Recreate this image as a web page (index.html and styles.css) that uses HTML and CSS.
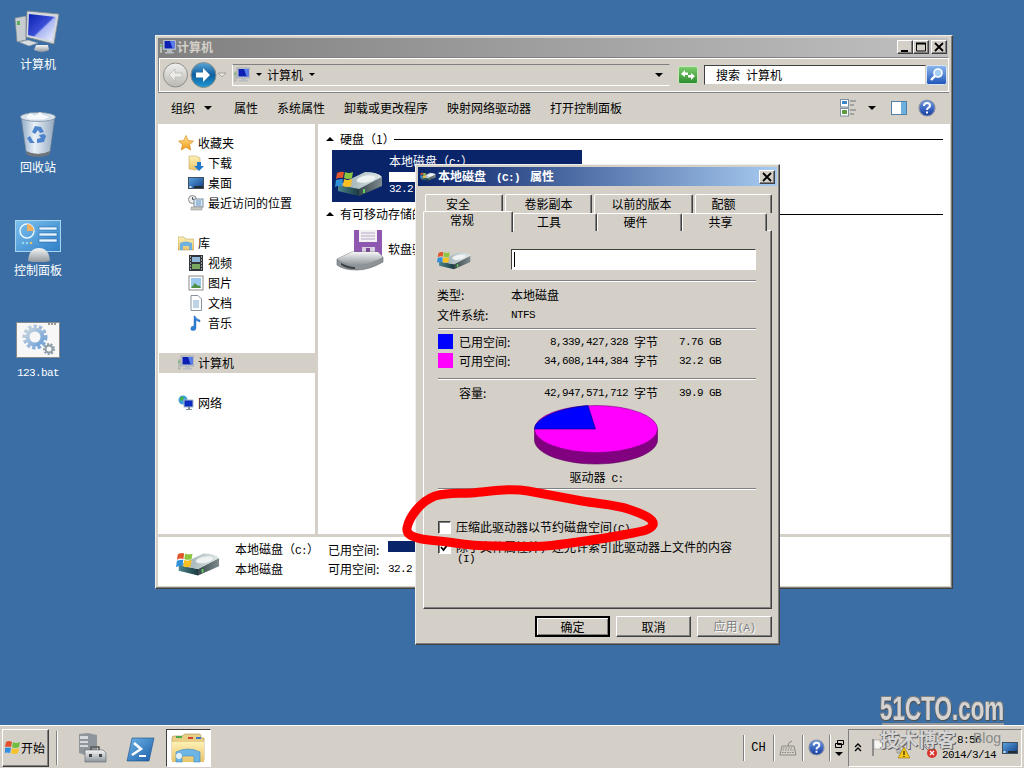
FILE: index.html
```html
<!DOCTYPE html>
<html lang="zh-CN">
<head>
    <meta charset="UTF-8">
    <meta name="viewport" content="width=device-width, initial-scale=1.0">
    <title>本地磁盘 (C:) 属性</title>
    <link rel="stylesheet" href="styles.css">
</head>
<body>
    <svg class="defs" width="0" height="0" aria-hidden="true">
        <defs>
            <linearGradient id="g-screen" x1="0" y1="0" x2="1" y2="1"><stop offset="0" stop-color="#0a1fb0"/><stop offset=".5" stop-color="#3a50d8"/><stop offset=".55" stop-color="#a9b6f2"/><stop offset="1" stop-color="#f2f4ff"/></linearGradient>
            <linearGradient id="g-metal" x1="0" y1="0" x2="0" y2="1"><stop offset="0" stop-color="#f4f5f6"/><stop offset="1" stop-color="#8f959b"/></linearGradient>
            <linearGradient id="g-bin" x1="0" y1="0" x2="1" y2="0"><stop offset="0" stop-color="#8ea9c4"/><stop offset=".4" stop-color="#eaf1f8"/><stop offset="1" stop-color="#90a6bd"/></linearGradient>
            <linearGradient id="g-panel" x1="0" y1="0" x2="1" y2="1"><stop offset="0" stop-color="#7cc0ee"/><stop offset="1" stop-color="#2f80c8"/></linearGradient>
            <linearGradient id="g-side" x1="0" y1="0" x2="1" y2="0"><stop offset="0" stop-color="#4d858e"/><stop offset="1" stop-color="#1b3a40"/></linearGradient>
            <linearGradient id="g-side2" x1="0" y1="0" x2="1" y2="0"><stop offset="0" stop-color="#3a484c"/><stop offset="1" stop-color="#7d8b8e"/></linearGradient>
            <linearGradient id="g-top" x1="0" y1="0" x2="1" y2="0"><stop offset="0" stop-color="#8fa5a9"/><stop offset="1" stop-color="#dfe6e6"/></linearGradient>
            <linearGradient id="g-star" x1="0" y1="0" x2="0" y2="1"><stop offset="0" stop-color="#ffe38a"/><stop offset="1" stop-color="#f09a1c"/></linearGradient>
            <linearGradient id="g-folder" x1="0" y1="0" x2="0" y2="1"><stop offset="0" stop-color="#fdf0b4"/><stop offset="1" stop-color="#e8c569"/></linearGradient>
            <linearGradient id="g-back" x1="0" y1="0" x2="0" y2="1"><stop offset="0" stop-color="#f1f1f0"/><stop offset="1" stop-color="#b9b8b2"/></linearGradient>
            <linearGradient id="g-fwd" x1="0" y1="0" x2="0" y2="1"><stop offset="0" stop-color="#5aa6d8"/><stop offset=".5" stop-color="#0f5f9e"/><stop offset="1" stop-color="#1f9ad6"/></linearGradient>
            <linearGradient id="g-search" x1="0" y1="0" x2="0" y2="1"><stop offset="0" stop-color="#8db8ee"/><stop offset="1" stop-color="#1f55b8"/></linearGradient>
            <linearGradient id="g-green" x1="0" y1="0" x2="0" y2="1"><stop offset="0" stop-color="#7fd070"/><stop offset="1" stop-color="#2c8a2c"/></linearGradient>
            <linearGradient id="g-help" x1="0" y1="0" x2="0" y2="1"><stop offset="0" stop-color="#6d9ce6"/><stop offset="1" stop-color="#12399e"/></linearGradient>
            <linearGradient id="g-ps" x1="0" y1="0" x2="1" y2="1"><stop offset="0" stop-color="#6fb4e6"/><stop offset="1" stop-color="#1a5ea8"/></linearGradient>
            <linearGradient id="g-desk" x1="0" y1="0" x2="1" y2="1"><stop offset="0" stop-color="#5aa4e0"/><stop offset="1" stop-color="#123d86"/></linearGradient>
            <linearGradient id="g-gear" x1="0" y1="0" x2="1" y2="1"><stop offset="0" stop-color="#c8d4de"/><stop offset="1" stop-color="#6ea0d8"/></linearGradient>

            <symbol id="ic-computer" viewBox="0 0 48 44">
                <path d="M1 8l11-2v24L3 32z" fill="#c6ccd0" stroke="#7d8488" stroke-width=".6"/>
                <rect x="3" y="11" width="3" height="4" fill="#58b058"/>
                <path d="M5 32l9-2 10 3-9 3z" fill="#d8dcde" stroke="#8b9195" stroke-width=".5"/>
                <path d="M22 35h12l1 5q-7 4-15 0z" fill="url(#g-metal)"/>
                <path d="M13 1l32 3-5 30-28-7z" fill="#d3d8dc" stroke="#7d8488" stroke-width=".8"/>
                <path d="M15 4l27 3-4 24-24-6z" fill="url(#g-screen)"/>
            </symbol>
            <symbol id="ic-computer-small" viewBox="0 0 16 16">
                <rect x="0" y="5" width="2" height="9" fill="#c8d0c8" stroke="#7b837b" stroke-width=".4"/>
                <rect x=".5" y="6" width="1" height="2" fill="#3fae3f"/>
                <rect x="3" y="1" width="13" height="10" fill="#c9ced4" stroke="#7d8590" stroke-width=".5"/>
                <rect x="4.500" y="2" width="10" height="7.500" fill="#0b1fb4"/>
                <path d="M10 2h4.500v7.500h-2z" fill="#5a7bea"/>
                <path d="M7 11h5v2h2v1.500H5V13h2z" fill="#b7bcc0"/>
            </symbol>
            <symbol id="ic-bin" viewBox="0 0 38 46">
                <path d="M2 6l5 35q12 5 24 0l5-35z" fill="url(#g-bin)" stroke="#66798c" stroke-width=".6"/>
                <ellipse cx="19" cy="6" rx="17.500" ry="4.500" fill="#dbe5ef" stroke="#7d8fa1" stroke-width=".8"/>
                <path d="M6 6l5-4 5 2 5-3 5 3 6 2-7 3H10z" fill="#f6f9fc" stroke="#b0c0d0" stroke-width=".5"/>
                <path d="M16 15l6 1 3 5-4 1-2-3-3 4-3-2zM27 25l-2 6-7 1v-4l4-1-2-3 5-1zM11 25l3 5 2 2-5 0-3-5z" fill="#4d84cc"/>
                <path d="M7 40q12 6 24 0l-1 4q-11 4-22 0z" fill="#6f757a"/>
            </symbol>
            <symbol id="ic-panel" viewBox="0 0 46 42">
                <rect x=".5" y=".5" width="45" height="31" fill="url(#g-panel)" stroke="#a9d4f0"/>
                <circle cx="12" cy="11" r="7" fill="none" stroke="#eaf6ff" stroke-width="1.500"/>
                <path d="M12 4a7 7 0 0 1 7 7h-7z" fill="#f0b060"/>
                <rect x="24" y="7" width="18" height="3" fill="#e6f5ff" stroke="#155a9c" stroke-width=".5"/>
                <rect x="24" y="13" width="18" height="3" fill="#e6f5ff" stroke="#155a9c" stroke-width=".5"/>
                <rect x="24" y="19" width="18" height="3" fill="#e6f5ff" stroke="#155a9c" stroke-width=".5"/>
                <circle cx="8" cy="23" r="1.300" fill="#8fd4f0"/><circle cx="12" cy="23" r="1.300" fill="#8fd4f0"/><circle cx="16" cy="23" r="1.300" fill="#e8c060"/>
                <path d="M13 41q1-13 11-13t11 13q-11 3-22 0z" fill="url(#g-metal)"/>
            </symbol>
            <symbol id="ic-gear-file" viewBox="0 0 44 36">
                <rect x=".5" y=".5" width="43" height="35" fill="#f7f7f7" stroke="#8a8a8a"/>
                <path d="M32 2h2M35 2h2M38 2h2" stroke="#777" stroke-width="1.500"/>
                <circle cx="19" cy="15" r="10.500" fill="none" stroke="url(#g-gear)" stroke-width="4" stroke-dasharray="3.300 2"/>
                <circle cx="19" cy="15" r="7.500" fill="none" stroke="url(#g-gear)" stroke-width="4"/>
                <circle cx="33" cy="27" r="5" fill="none" stroke="#8d9da8" stroke-width="2" stroke-dasharray="2 1.500"/>
                <circle cx="33" cy="27" r="3.500" fill="none" stroke="#8d9da8" stroke-width="2"/>
            </symbol>
            <symbol id="ic-drive" viewBox="0 0 48 28">
                <path d="M24 20L47 8v9L24 27z" fill="url(#g-side2)"/>
                <path d="M3 16l21 4v7L3 22z" fill="url(#g-side)"/>
                <path d="M3 16L30 3q13 0 17 5L24 20z" fill="url(#g-top)"/>
                <ellipse cx="31" cy="10" rx="9.500" ry="3.500" fill="#eef2f2" transform="rotate(-10 31 10)"/>
                <rect x="28" y="20" width="2" height="4" fill="#5fd05f"/>
                <path d="M2 4q4-2 7-1l-1 6q-4-1-7 1z" fill="#e0552c"/>
                <path d="M10 3q4 2 8 0l-1 6q-4 2-8 0z" fill="#8cc63f"/>
                <path d="M1 11q3-1 7-1l-1 7q-4-1-7 1z" fill="#2f8fd8"/>
                <path d="M9 10q4 2 8 0l-1 7q-4 2-8 0z" fill="#f8c020"/>
            </symbol>
            <symbol id="ic-floppy" viewBox="0 0 50 42">
                <path d="M19 1h28v26H19z" fill="#8f58b0"/>
                <rect x="24" y="1" width="18" height="12" fill="#f2f2f2"/>
                <path d="M26 4h14M26 7h14M26 10h14" stroke="#b8a8c8" stroke-width="1"/>
                <rect x="27" y="18" width="13" height="9" fill="#d8d0e0"/><rect x="31" y="19" width="4" height="7" fill="#7a4a98"/>
                <path d="M2 30l15-7h26l5 5v5q-14 8-26 8Q8 41 2 36z" fill="#8d9396" stroke="#62686b" stroke-width=".6"/>
                <path d="M2 30q10 6 20 6 14-1 26-8l-5-5H17z" fill="url(#g-metal)"/>
                <path d="M6 34q8 4 14 4v2q-8 0-14-4z" fill="#3c4245"/>
            </symbol>
            <symbol id="ic-star" viewBox="0 0 16 16"><path d="M8 .5l2.300 5 5.200.6-3.900 3.500 1.100 5.400L8 12.200 3.300 15l1.100-5.400L.5 6.100l5.200-.6z" fill="url(#g-star)" stroke="#d08418" stroke-width=".6"/></symbol>
            <symbol id="ic-download" viewBox="0 0 16 16"><path d="M1 1h7l4 2v9l-4 3-7-1z" fill="url(#g-folder)" stroke="#b89a4c" stroke-width=".5"/><path d="M9 7h4v4h3l-5 5-5-5h3z" fill="#1f78cc"/></symbol>
            <symbol id="ic-desktop" viewBox="0 0 16 16"><rect x=".5" y="2.500" width="15" height="11" fill="url(#g-desk)" stroke="#3f4f60"/><rect x="6" y="11" width="9" height="2" fill="#232b33"/><rect x="1.500" y="11" width="2" height="2" fill="#c8e0f0"/></symbol>
            <symbol id="ic-recent" viewBox="0 0 16 16"><circle cx="4.500" cy="4.500" r="4" fill="#eee" stroke="#888"/><path d="M4.500 2v2.500H7" fill="none" stroke="#555"/><rect x="6" y="4" width="9" height="8" fill="#dfe8f0" stroke="#7d8fa1"/><path d="M8 6h5M8 8h5M8 10h5" stroke="#5f96c8"/><path d="M3 12h11v3H3z" fill="#c8c8c0" stroke="#888" stroke-width=".5"/></symbol>
            <symbol id="ic-library" viewBox="0 0 16 16"><path d="M0 2h6l1 2h9v11H0z" fill="url(#g-folder)" stroke="#a89048" stroke-width=".5"/><path d="M2 15V8q6-3 12 0v7h-3v-4H5v4z" fill="#6fb0e0"/></symbol>
            <symbol id="ic-video" viewBox="0 0 16 16"><rect x="1" y="0" width="14" height="16" fill="#30363a"/><rect x="4" y="2" width="8" height="5" fill="#8fb8d8"/><rect x="4" y="9" width="8" height="5" fill="#7aa860"/><path d="M2 2h1M2 5h1M2 8h1M2 11h1M2 14h1M13 2h1M13 5h1M13 8h1M13 11h1M13 14h1" stroke="#fff"/></symbol>
            <symbol id="ic-picture" viewBox="0 0 16 16"><rect x="1" y="1" width="14" height="14" fill="#fff" stroke="#8a8a8a"/><rect x="3" y="3" width="10" height="10" fill="#9ac8ee"/><path d="M3 13l4-5 3 3 1-1 2 3z" fill="#4f9040"/></symbol>
            <symbol id="ic-doc" viewBox="0 0 16 16"><path d="M3 .5h7l3.500 3.500v11.500H3z" fill="#fff" stroke="#8a939c"/><path d="M5 6h6M5 8h6M5 10h6M5 12h6" stroke="#7fa6cf"/></symbol>
            <symbol id="ic-music" viewBox="0 0 16 16"><path d="M7 1q1 3 5 4v2q-3-1-4-2v8q0 2.500-3 2.500T3 13q0-2 3-2h0V1z" fill="#2f80d8" stroke="#1c5ea8" stroke-width=".4"/></symbol>
            <symbol id="ic-network" viewBox="0 0 16 16"><circle cx="5" cy="5" r="4.500" fill="#3f9fd8"/><path d="M2 3q2-2 4-1l-1 3-3 1zM6 6l3 1-2 2z" fill="#48b048"/><rect x="6" y="5" width="9" height="7" fill="#0b2cc0" stroke="#a8b8c8"/><path d="M10 12h2v2h2v1H8v-1h2z" fill="#8a929a"/></symbol>
            <symbol id="ic-server" viewBox="0 0 30 30"><path d="M2 1l9-1 9 2v18l-9 3-9-3z" fill="#8e959b"/><path d="M3 3h8v3H3zM3 8h8v2H3zM3 12h8v2H3z" fill="#d5d9dd"/><path d="M8 17h18l3 3v9H8z" fill="url(#g-metal)" stroke="#5f656b" stroke-width=".6"/><path d="M14 17v-3h8v3" fill="none" stroke="#555" stroke-width="1.500"/><rect x="12" y="21" width="3" height="3" fill="#444"/><rect x="22" y="21" width="3" height="3" fill="#444"/></symbol>
            <symbol id="ic-powershell" viewBox="0 0 29 25"><path d="M6 1h22l-5 23H1z" fill="url(#g-ps)" stroke="#164e8c" stroke-width=".6"/><path d="M8 6l7 6-9 6" fill="none" stroke="#fff" stroke-width="2.500"/><path d="M13 19h7" stroke="#fff" stroke-width="2"/></symbol>
            <symbol id="ic-explorer" viewBox="0 0 34 30"><path d="M1 5q0-2 2-2h8l3-2h14q2 0 2 2v2h3v22H1z" fill="#e9cf86" stroke="#a88f48" stroke-width=".6"/><rect x="5" y="3" width="6" height="2" fill="#4aa84a"/><rect x="17" y="4" width="5" height="2" fill="#d0402c"/><rect x="25" y="4" width="5" height="2" fill="#3a78c8"/><path d="M1 9h32v20H1z" fill="url(#g-folder)"/><path d="M5 29V19q12-6 24 0v10h-6v-6H11v6z" fill="#6db5e4" stroke="#3f86bc" stroke-width=".6"/><circle cx="8" cy="23" r="3" fill="#fff" opacity=".8"/></symbol>
            <symbol id="ic-views" viewBox="0 0 17 18"><rect x=".5" y=".5" width="8" height="7.500" fill="#fff" stroke="#7d8fa1"/><rect x="2" y="2" width="5" height="3" fill="#3a86c8"/><rect x=".5" y="9.500" width="8" height="7.500" fill="#fff" stroke="#7d8fa1"/><rect x="2" y="11" width="5" height="4" fill="#5f9a40"/><path d="M10 2h6M10 6h4M10 11h6M10 15h4" stroke="#6d7780"/></symbol>
            <symbol id="ic-pane" viewBox="0 0 16 14"><rect x=".5" y=".5" width="15" height="13" fill="#fff" stroke="#4f7fa8"/><rect x="10" y="1" width="5" height="12" fill="#6db0de"/></symbol>
            <symbol id="ic-help" viewBox="0 0 18 18"><circle cx="9" cy="9" r="8" fill="url(#g-help)" stroke="#8a93a8" stroke-width="1.200"/><path d="M6 7q0-3 3-3t3 2.500q0 1.500-2 2.500-1 .6-1 2" fill="none" stroke="#fff" stroke-width="2"/><rect x="8" y="12.500" width="2" height="2" fill="#fff"/></symbol>
            <symbol id="ic-keyboard" viewBox="0 0 18 16"><path d="M3 6L1 15h16l-2-9z" fill="#d4d0c8" stroke="#8a8a84"/><path d="M4 8h10M3.500 10h11M3 12.500h12" stroke="#8a8a84" stroke-dasharray="1.500 1"/><path d="M9 6q0-4 4-5" fill="none" stroke="#8a8a84"/></symbol>
        </defs>
    </svg>

    <div class="desktop">
        <div class="desktop-icons">
            <div class="desk-item"><svg class="di-computer"><use href="#ic-computer"/></svg><span>计算机</span></div>
            <div class="desk-item"><svg class="di-bin"><use href="#ic-bin"/></svg><span>回收站</span></div>
            <div class="desk-item"><svg class="di-panel"><use href="#ic-panel"/></svg><span>控制面板</span></div>
            <div class="desk-item"><svg class="di-gear"><use href="#ic-gear-file"/></svg><span class="lat">123.bat</span></div>
        </div>

        <div class="window explorer">
            <div class="titlebar">
                <svg class="ic16"><use href="#ic-computer-small"/></svg>
                <span class="title-text">计算机</span>
                <div class="caption-btns">
                    <button class="cap-btn"><svg viewBox="0 0 14 12"><rect x="3" y="9" width="7" height="2"/></svg></button>
                    <button class="cap-btn"><svg viewBox="0 0 14 12"><path d="M2.500 2.500h9v7.500h-9z" fill="none" stroke="#000"/><rect x="2" y="1.500" width="10" height="2"/></svg></button>
                    <button class="cap-btn cap-gap"><svg viewBox="0 0 14 12"><path d="M3 2l8 8M11 2l-8 8" stroke="#000" stroke-width="1.800"/></svg></button>
                </div>
            </div>

            <div class="navbar">
                <svg class="nav-arrows" viewBox="0 0 65 26">
                    <circle cx="12.500" cy="13" r="12" fill="url(#g-back)" stroke="#8f8e88"/>
                    <path d="M6 13l6-6v4h7v4h-7v4z" fill="#ecebe6" stroke="#b0afa8" stroke-width=".6"/>
                    <circle cx="40.500" cy="13" r="12.500" fill="url(#g-fwd)" stroke="#8f8e88"/>
                    <path d="M47 13l-7-7v4.500h-7v5h7V20z" fill="#fff"/>
                    <path d="M55 11h8l-4 4z" fill="#e6e6e0" stroke="#8f8e88" stroke-width=".7"/>
                </svg>
                <div class="address">
                    <svg class="ic16"><use href="#ic-computer-small"/></svg>
                    <span class="tri-down addr-tri"></span>
                    <span>计算机</span>
                    <span class="tri-down addr-tri"></span>
                    <span class="tri-down addr-end"></span>
                </div>
                <svg class="refresh" viewBox="0 0 20 18">
                    <rect x=".5" y=".5" width="19" height="17" rx="1.500" fill="url(#g-green)" stroke="#c8e8c0"/>
                    <path d="M3 8l4-4v2.500h3V9H7v2zM17 10l-4 4v-2.500h-3V9h3V7z" fill="#fff"/>
                </svg>
                <div class="search-box">搜索&ensp;计算机</div>
                <svg class="search-btn" viewBox="0 0 21 20">
                    <rect x=".5" y=".5" width="20" height="19" rx="2" fill="url(#g-search)" stroke="#d8e4f4"/>
                    <circle cx="12" cy="8" r="4" fill="#a8d0f4" stroke="#fff" stroke-width="1.600"/>
                    <path d="M9 11l-4 4" stroke="#fff" stroke-width="2.400"/>
                </svg>
            </div>

            <div class="commandbar">
                <span class="cmd-first">组织</span><span class="tri-down cmd-tri"></span>
                <span class="cmd">属性</span>
                <span class="cmd">系统属性</span>
                <span class="cmd">卸载或更改程序</span>
                <span class="cmd">映射网络驱动器</span>
                <span class="cmd">打开控制面板</span>
                <div class="cmd-right">
                    <svg class="ic-views"><use href="#ic-views"/></svg>
                    <span class="tri-down views-tri"></span>
                    <svg class="ic-pane"><use href="#ic-pane"/></svg>
                    <svg class="ic-help"><use href="#ic-help"/></svg>
                </div>
            </div>

            <div class="explorer-body">
                <div class="nav-pane">
                    <div class="nav-row"><svg class="ic16"><use href="#ic-star"/></svg>收藏夹</div>
                    <div class="nav-row child"><svg class="ic16"><use href="#ic-download"/></svg>下载</div>
                    <div class="nav-row child"><svg class="ic16"><use href="#ic-desktop"/></svg>桌面</div>
                    <div class="nav-row child"><svg class="ic16"><use href="#ic-recent"/></svg>最近访问的位置</div>
                    <div class="nav-row group"><svg class="ic16"><use href="#ic-library"/></svg>库</div>
                    <div class="nav-row child"><svg class="ic16"><use href="#ic-video"/></svg>视频</div>
                    <div class="nav-row child"><svg class="ic16"><use href="#ic-picture"/></svg>图片</div>
                    <div class="nav-row child"><svg class="ic16"><use href="#ic-doc"/></svg>文档</div>
                    <div class="nav-row child"><svg class="ic16"><use href="#ic-music"/></svg>音乐</div>
                    <div class="nav-row group selected"><svg class="ic16"><use href="#ic-computer-small"/></svg>计算机</div>
                    <div class="nav-row group"><svg class="ic16"><use href="#ic-network"/></svg>网络</div>
                </div>
                <div class="main-pane">
                    <div class="group-head"><span class="tri-up"></span><span class="group-name">硬盘（1）</span><span class="group-line"></span></div>
                    <div class="tile">
                        <svg class="tile-drive"><use href="#ic-drive"/></svg>
                        <div class="tile-text">
                            <div class="tile-line">本地磁盘（<span class="lat">C:</span>）</div>
                            <div class="tile-bar"></div>
                            <div class="tile-line lat">32.2 GB 可用</div>
                        </div>
                    </div>
                    <div class="group-head second"><span class="tri-up"></span><span class="group-name">有可移动存储的设备（1）</span><span class="group-line"></span></div>
                    <div class="floppy"><svg class="floppy-icon"><use href="#ic-floppy"/></svg><span>软盘驱动器（<span class="lat">A:</span>）</span></div>
                </div>
            </div>

            <div class="details">
                <svg class="details-icon"><use href="#ic-drive"/></svg>
                <div class="details-grid">
                    <span>本地磁盘（<span class="lat">C:</span>）</span><span>已用空间:</span><span class="details-bar"></span>
                    <span>本地磁盘</span><span>可用空间:</span><span class="lat">32.2 GB</span>
                </div>
            </div>
        </div>

        <div class="window dialog">
            <div class="dlg-title">
                <svg class="dlg-icon"><use href="#ic-drive"/></svg>
                <span>本地磁盘<span class="lat dlg-drive">(C:)</span>属性</span>
                <button class="cap-btn dlg-close"><svg viewBox="0 0 14 12"><path d="M3 2l8 8M11 2l-8 8" stroke="#000" stroke-width="1.800"/></svg></button>
            </div>
            <div class="tabs">
                <div class="tab-row back">
                    <div class="tab t78 shift">安全</div>
                    <div class="tab t88">卷影副本</div>
                    <div class="tab t100 nudge">以前的版本</div>
                    <div class="tab t77 shift-more">配额</div>
                </div>
                <div class="tab-row front">
                    <div class="tab active shift">常规</div>
                    <div class="tab t84 shift">工具</div>
                    <div class="tab t85 shift-less">硬件</div>
                    <div class="tab t85 shift-less">共享</div>
                </div>
            </div>
            <div class="panel">
                <div class="vol-head">
                    <svg class="vol-icon"><use href="#ic-drive"/></svg>
                    <div class="vol-input"><span class="caret"></span></div>
                </div>
                <div class="sep"></div>
                <div class="info-grid">
                    <span>类型:</span><span>本地磁盘</span>
                    <span>文件系统:</span><span class="lat">NTFS</span>
                </div>
                <div class="sep"></div>
                <div class="space-grid used-free">
                    <span class="swatch used"></span><span>已用空间:</span><span class="num lat">8,339,427,328</span><span class="unit">字节</span><span class="lat">7.76 GB</span>
                    <span class="swatch free"></span><span>可用空间:</span><span class="num lat">34,608,144,384</span><span class="unit">字节</span><span class="lat">32.2 GB</span>
                </div>
                <div class="sep sep-cap"></div>
                <div class="space-grid">
                    <span></span><span>容量:</span><span class="num lat">42,947,571,712</span><span class="unit">字节</span><span class="lat">39.9 GB</span>
                </div>
                <svg class="pie" viewBox="0 0 124 60">
                    <path d="M.5 24v11c0 13 27.300 24 61 24s62-11 62-24V24z" fill="#800080" stroke="#5a005a" stroke-width=".6"/>
                    <ellipse cx="62" cy="24" rx="61.500" ry="23.500" fill="#ff00ff" stroke="#800080" stroke-width=".6"/>
                    <path d="M61.500 24H.5C.5 14 24 3 54 .6z" fill="#0000ff" stroke="#00007a" stroke-width=".6"/>
                </svg>
                <div class="pie-label">驱动器&ensp;<span class="lat">C:</span></div>
                <div class="sep sep-pie"></div>
                <div class="check-row first"><span class="checkbox"></span><span>压缩此驱动器以节约磁盘空间<span class="lat">(C)</span></span></div>
                <div class="check-row second"><span class="checkbox"><svg viewBox="0 0 11 11"><path d="M2 5l2.500 3L9 2" fill="none" stroke="#000" stroke-width="1.800"/></svg></span><span>除了文件属性外，还允许索引此驱动器上文件的内容<span class="lat wrap-mark">(I)</span></span></div>
            </div>
            <div class="dlg-buttons">
                <button class="btn default">确定</button>
                <button class="btn">取消</button>
                <button class="btn disabled">应用<span class="lat">(A)</span></button>
            </div>
        </div>

        <svg class="scribble" viewBox="0 0 270 70">
            <path d="M12 47C14 36 26 20 40 15C55 11 62 13 77 12C100 10 115 7 133 10C150 13 170 17 187 20C205 23 222 24 233 28C248 33 260 38 258 44C255 50 243 51 233 53C218 56 205 58 190 60C176 62 165 64 150 65C133 66 117 65 100 65C85 65 72 64 60 62C48 60 38 60 27 58C18 56 11 54 12 47Z" fill="none" stroke="#f00" stroke-width="9"/>
        </svg>
    </div>

    <div class="taskbar">
        <button class="start-btn">
            <svg class="start-flag" viewBox="0 0 16 15"><path d="M1 2q3-2 6 0l-1 5q-3-1-6 0z" fill="#e2502c"/><path d="M8 2q3 2 7 0l-1 5q-4 2-7 0z" fill="#6fbf3f"/><path d="M0 8q3-1 6 0l-1 5q-3-1-5 0z" fill="#2f8fe0"/><path d="M7 8q3 2 7 0l-1 5q-4 2-7 0z" fill="#f5c22c"/></svg>开始
        </button>
        <span class="quick-sep"></span>
        <svg class="tb-server"><use href="#ic-server"/></svg>
        <svg class="tb-ps"><use href="#ic-powershell"/></svg>
        <div class="task-active"><svg class="tb-explorer"><use href="#ic-explorer"/></svg></div>
        <div class="tb-right">
            <div class="tb-cell c30 lat-ch">CH</div>
            <div class="tb-cell c29"><svg class="tb-key"><use href="#ic-keyboard"/></svg></div>
            <div class="tb-cell c27"><svg class="tb-help"><use href="#ic-help"/></svg></div>
            <div class="tb-cell c19 restore">
                <svg class="tb-restore" viewBox="0 0 9 8"><path d="M2.500.5h6v4h-6zM.5 3.500h6v4h-6z" fill="#d4d0c8" stroke="#000"/></svg>
                <span class="tri-down"></span>
            </div>
            <div class="tray">
                <svg class="tray-chev" viewBox="0 0 8 9"><path d="M1 4l3-3 3 3M1 8l3-3 3 3" fill="none" stroke="#000" stroke-width="1.300"/></svg>
                <svg class="tray-flag" viewBox="0 0 13 17"><path d="M1 0v17" stroke="#777" stroke-width="1.500"/><path d="M2 1h10v9H2z" fill="#f6f6f6" stroke="#999" stroke-width=".6"/></svg>
                <svg class="tray-net" viewBox="0 0 14 14"><rect x="1" y="2" width="3" height="6" fill="#c8c8c8" stroke="#666" stroke-width=".5"/><path d="M8 2l6 11H2z" fill="#f5c818" stroke="#8a7010" stroke-width=".6"/><rect x="7.500" y="6" width="1" height="4"/><rect x="7.500" y="11" width="1" height="1"/></svg>
                <svg class="tray-spk" viewBox="0 0 14 14"><path d="M0 1l6 6" stroke="#777"/><circle cx="8" cy="8" r="5" fill="#d8342c"/><path d="M6 6l4 4M10 6l-4 4" stroke="#fff" stroke-width="1.200"/></svg>
                <div class="clock lat"><span>8:56</span><span>2014/3/14</span></div>
                <svg class="tray-desk"><use href="#ic-desktop"/></svg>
            </div>
        </div>
    </div>

    <div class="watermark">
        <div class="wm-logo">51CTO.com</div>
        <div class="wm-rule"></div>
        <div class="wm-bottom"><span class="wm-cn">技术博客</span><span class="wm-blog">Blog</span></div>
    </div>
</body>
</html>
```

FILE: styles.css
```css
* {
    box-sizing: border-box;
}
html, body {
    margin: 0;
    padding: 0;
}
body {
    position: relative;
    width: 1024px;
    height: 768px;
    overflow: hidden;
    display: flex;
    flex-direction: column;
    background: #3a6ea5;
    color: #000;
    font-family: "Noto Sans CJK SC", "Liberation Sans", sans-serif;
    font-size: 12px;
    line-height: 14px;
}
svg {
    display: block;
    flex: none;
}
button {
    font: inherit;
    padding: 0;
    color: inherit;
}
.defs {
    position: absolute;
}
.lat {
    font-family: "Liberation Mono", monospace;
    font-size: 11px;
    letter-spacing: -0.6px;
}
.ic16 {
    width: 16px;
    height: 16px;
}

/* triangles */
.tri-down {
    width: 0;
    height: 0;
    flex: none;
    border-left: 4px solid transparent;
    border-right: 4px solid transparent;
    border-top: 4px solid #000;
}
.tri-up {
    width: 0;
    height: 0;
    flex: none;
    border-left: 4px solid transparent;
    border-right: 4px solid transparent;
    border-bottom: 4px solid #000;
}

/* desktop */
.desktop {
    position: relative;
    height: 725px;
    flex: none;
}
.desktop-icons {
    display: flex;
    flex-direction: column;
    width: 76px;
    padding-top: 10px;
}
.desk-item {
    display: flex;
    flex-direction: column;
    align-items: center;
    color: #fff;
}
.desk-item:nth-child(1) { height: 101px; }
.desk-item:nth-child(2) { height: 109px; }
.desk-item:nth-child(3) { height: 102px; }
.di-computer {
    width: 48px;
    height: 44px;
    margin-bottom: 3px;
}
.di-bin {
    width: 38px;
    height: 46px;
    margin-bottom: 3px;
}
.di-panel {
    width: 46px;
    height: 42px;
    margin-bottom: 1px;
}
.di-gear {
    width: 44px;
    height: 36px;
    margin-bottom: 8px;
}

/* windows */
.window {
    position: absolute;
    background: #d4d0c8;
    border: 1px solid;
    border-color: #f0efeb #404040 #404040 #f0efeb;
    box-shadow: inset -1px -1px 0 #808080;
}
.explorer {
    left: 155px;
    top: 35px;
    width: 798px;
    height: 554px;
    padding: 2px;
    display: flex;
    flex-direction: column;
}
.titlebar {
    height: 19px;
    margin-right: 2px;
    display: flex;
    align-items: center;
    padding-left: 2px;
    padding-bottom: 1px;
    background: linear-gradient(90deg, #808080, #c0c0c0);
    color: #d4d0c8;
    font-weight: bold;
}
.title-text {
    margin-left: 1px;
    margin-bottom: 1px;
}
.caption-btns {
    margin-left: auto;
    display: flex;
    padding-right: 1px;
}
.cap-btn {
    width: 16px;
    height: 14px;
    background: #d4d0c8;
    border: 1px solid;
    border-color: #fff #404040 #404040 #fff;
    box-shadow: inset -1px -1px 0 #808080;
}
.cap-gap {
    margin-left: 2px;
}

/* explorer nav bar */
.navbar {
    height: 35px;
    margin-right: 1px;
    display: flex;
    align-items: center;
    padding-left: 5px;
    border: 1px solid;
    border-color: #808080 #fff #fff #808080;
    box-shadow: inset 1px 1px 0 #fff, 0 1px 0 #808080;
}
.nav-arrows {
    width: 65px;
    height: 26px;
    margin-left: -1px;
}
.address {
    width: 438px;
    height: 22px;
    margin-left: 4px;
    display: flex;
    align-items: center;
    border: 1px solid;
    border-color: #808080 #d4d0c8 #fff #fff;
    padding-left: 1px;
}
.address .addr-tri {
    border-left-width: 3px;
    border-right-width: 3px;
    border-top-width: 3px;
    margin: 0 5px 0 6px;
}
.addr-end {
    margin-left: auto;
    margin-right: 6px;
}
.refresh {
    width: 20px;
    height: 18px;
    margin-left: 8px;
}
.search-box {
    width: 222px;
    height: 20px;
    margin-left: 6px;
    padding-left: 11px;
    line-height: 18px;
    background: #fff;
    border: 1px solid;
    border-color: #404040 #d4d0c8 #d4d0c8 #404040;
}
.search-btn {
    width: 21px;
    height: 20px;
}

/* explorer command bar */
.commandbar {
    height: 32px;
    display: flex;
    align-items: center;
    padding-left: 13px;
}
.cmd-tri {
    margin-left: 9px;
    margin-right: 1px;
}
.cmd {
    margin-left: 19px;
}
.cmd-first + .cmd-tri + .cmd {
    margin-left: 21px;
}
.cmd-right {
    margin-left: auto;
    margin-right: 14px;
    display: flex;
    align-items: center;
}
.ic-views {
    width: 17px;
    height: 18px;
}
.views-tri {
    margin-left: 11px;
}
.ic-pane {
    width: 16px;
    height: 14px;
    margin-left: 15px;
}
.ic-help {
    width: 18px;
    height: 18px;
    margin-left: 11px;
}

/* explorer body */
.explorer-body {
    height: 410px;
    display: flex;
}
.nav-pane {
    width: 157px;
    padding-top: 9px;
    margin-right: 3px;
    background: #fff;
}
.nav-row {
    height: 20px;
    display: flex;
    align-items: center;
    padding-left: 20px;
}
.nav-row .ic16 {
    margin-right: 4px;
}
.nav-row.child {
    padding-left: 30px;
}
.nav-row.group {
    margin-top: 20px;
}
.nav-row.selected {
    background: #d4d0c8;
    margin-left: 1px;
    padding-left: 19px;
}
.main-pane {
    flex: 1;
    background: #fff;
    padding-top: 6px;
}
.group-head {
    height: 18px;
    display: flex;
    align-items: center;
    padding-left: 8px;
    padding-right: 7px;
}
.group-head.second {
    margin-top: 3px;
}
.group-name {
    margin-left: 6px;
    white-space: nowrap;
}
.group-line {
    flex: 1;
    height: 1px;
    margin-left: -1px;
    background: #000;
}
.tile {
    width: 250px;
    height: 52px;
    margin: 2px 0 0 14px;
    display: flex;
    background: #0a246a;
    color: #fff;
}
.tile-drive {
    width: 48px;
    height: 28px;
    margin: 19px 0 0 3px;
}
.tile-text {
    margin: 4px 0 0 6px;
}
.tile-line {
    height: 14px;
    white-space: nowrap;
}
.tile-bar {
    width: 180px;
    height: 10px;
    margin-top: 4px;
    background: #fff;
}
.floppy {
    height: 42px;
    margin: 6px 0 0 17px;
    display: flex;
    align-items: center;
}
.floppy-icon {
    width: 50px;
    height: 42px;
    margin-right: 3px;
}

/* details pane */
.details {
    height: 49px;
    margin-top: 3px;
    display: flex;
    background: #fff;
}
.details-icon {
    width: 44px;
    height: 27px;
    margin: 13px 0 0 18px;
}
.details-grid {
    margin: 3px 0 0 15px;
    display: grid;
    grid-template-columns: 93px 60px 200px;
    grid-auto-rows: 19px;
    align-items: center;
}
.details-bar {
    height: 11px;
    background: #0a246a;
    margin-bottom: 6px;
}

/* properties dialog */
.dialog {
    left: 415px;
    top: 164px;
    width: 365px;
    height: 481px;
    padding: 2px;
}
.dlg-title {
    height: 19px;
    display: flex;
    align-items: center;
    padding-left: 2px;
    background: linear-gradient(90deg, #0a246a, #a6caf0);
    color: #fff;
    font-weight: bold;
}
.dlg-drive {
    margin: 0 10px;
    font-weight: bold;
}
.dlg-icon {
    width: 16px;
    height: 11px;
    margin-right: 2px;
}
.dlg-close {
    margin-left: auto;
    margin-right: 2px;
}
.tabs {
    height: 36px;
    margin-top: 8px;
    margin-left: 5px;
    position: relative;
}
.tab-row {
    display: flex;
    align-items: flex-end;
}
.tab-row.back {
    height: 19px;
    margin-left: 2px;
    gap: 2px;
    overflow: hidden;
}
.tab-row.front {
    height: 18px;
}
.tab {
    height: 19px;
    text-align: center;
    background: #d4d0c8;
    border-top: 1px solid #fff;
    border-left: 1px solid #fff;
    border-right: 1px solid #404040;
    border-radius: 2px 2px 0 0;
    box-shadow: inset -1px 0 0 #808080;
    padding-top: 2px;
}
.tab.shift {
    padding-right: 12px;
}
.tab.shift-more {
    padding-right: 20px;
}
.tab.shift-less {
    padding-right: 8px;
}
.tab.nudge {
    padding-right: 4px;
}
.t78 { width: 78px; }
.t88 { width: 87px; }
.t100 { width: 99px; }
.t77 { width: 77px; }
.t84 { width: 84px; }
.t85 { width: 85px; }
.tab-row.front .tab {
    height: 18px;
    padding-top: 1px;
}
.tab-row.front .tab.active {
    width: 90px;
    height: 21px;
    margin-bottom: -1px;
    margin-top: -3px;
    padding-top: 1px;
    position: relative;
    z-index: 2;
}
.panel {
    height: 379px;
    margin-left: 5px;
    width: 349px;
    padding: 18px 15px 0 13px;
    border: 1px solid;
    border-color: #fff #404040 #404040 #fff;
    box-shadow: inset -1px -1px 0 #808080;
}
.vol-head {
    height: 21px;
    display: flex;
    align-items: center;
}
.vol-icon {
    width: 34px;
    height: 24px;
    margin-right: 40px;
}
.vol-input {
    flex: 1;
    height: 21px;
    padding: 2px 0 0 2px;
    background: #fff;
    border: 1px solid;
    border-color: #404040 #fff #fff #404040;
}
.caret {
    display: block;
    width: 1px;
    height: 15px;
    background: #000;
}
.sep {
    height: 2px;
    margin-top: 10px;
    margin-left: 1px;
    border-top: 1px solid #808080;
    border-bottom: 1px solid #fff;
}
.info-grid {
    margin-top: 3px;
    margin-bottom: -7px;
    display: grid;
    grid-template-columns: 74px 1fr;
    grid-auto-rows: 20px;
    align-items: center;
}
.space-grid {
    margin-top: 3px;
    display: grid;
    grid-template-columns: 22px 69px 100px 51px 1fr;
    grid-auto-rows: 19px;
    align-items: center;
}
.space-grid.used-free {
    margin-top: 2px;
}
.sep-cap {
    margin-top: 8px;
}
.num {
    text-align: right;
}
.unit {
    padding-left: 6px;
}
.swatch {
    display: block;
    width: 15px;
    height: 15px;
    margin-left: 1px;
}
.swatch.used {
    background: #00f;
}
.swatch.free {
    background: #f0f;
}
.pie {
    width: 124px;
    height: 60px;
    margin: 3px 0 0 97px;
}
.pie-label {
    margin-top: 5px;
    height: 14px;
    text-align: center;
}
.sep-pie {
    margin-top: 4px;
}
.check-row {
    display: flex;
    align-items: flex-start;
    margin-left: 1px;
    line-height: 12px;
}
.check-row.first {
    margin-top: 31px;
}
.check-row.second {
    margin-top: 6px;
}
.checkbox {
    display: block;
    flex: none;
    width: 13px;
    height: 13px;
    margin-right: 5px;
    background: #fff;
    border: 1px solid;
    border-color: #404040 #fff #fff #404040;
    box-shadow: inset 1px 1px 0 #808080;
}
.wrap-mark {
    display: block;
    line-height: 12px;
    padding-left: 1px;
}
.dlg-buttons {
    display: flex;
    justify-content: flex-end;
    gap: 6px;
    margin-top: 7px;
    margin-right: 5px;
}
.btn {
    width: 75px;
    height: 21px;
    background: #d4d0c8;
    border: 1px solid;
    border-color: #fff #404040 #404040 #fff;
    box-shadow: inset -1px -1px 0 #808080;
}
.btn.default {
    border: 2px solid #000;
    box-shadow: inset 1px 1px 0 #fff, inset -1px -1px 0 #808080;
}
.btn.disabled {
    color: #808080;
    text-shadow: 1px 1px 0 #fff;
}
.scribble {
    position: absolute;
    left: 395px;
    top: 480px;
    width: 270px;
    height: 72px;
    filter: blur(0.6px);
}

/* taskbar */
.taskbar {
    height: 43px;
    display: flex;
    align-items: center;
    padding-top: 1px;
    padding-left: 2px;
    background: #d4d0c8;
    border-top: 1px solid #fff;
}
.start-btn {
    width: 47px;
    height: 38px;
    display: flex;
    align-items: center;
    padding-left: 2px;
    background: #d4d0c8;
    border: 1px solid;
    border-color: #fff #404040 #404040 #fff;
    box-shadow: inset -1px -1px 0 #808080;
}
.start-flag {
    width: 16px;
    height: 15px;
}
.quick-sep {
    width: 2px;
    height: 34px;
    margin-left: 7px;
    border-left: 1px solid #808080;
    border-right: 1px solid #fff;
}
.tb-server {
    width: 30px;
    height: 30px;
    margin-left: 19px;
}
.tb-ps {
    width: 29px;
    height: 25px;
    margin: 4px 0 0 19px;
}
.task-active {
    width: 45px;
    height: 38px;
    margin-left: 11px;
    padding: 3px 0 0 4px;
    background: #fff;
    border: 1px solid;
    border-color: #404040 #fff #fff #404040;
}
.tb-explorer {
    width: 34px;
    height: 30px;
}
.tb-right {
    margin-left: auto;
    margin-right: 2px;
    display: flex;
    align-items: center;
}
.tb-cell {
    height: 26px;
    display: flex;
    align-items: center;
    justify-content: center;
    border-left: 1px solid #808080;
    box-shadow: inset 1px 0 0 #fff;
}
.c30 { width: 30px; }
.c29 { width: 29px; }
.c27 { width: 27px; }
.c19 { width: 19px; }
.lat-ch {
    font-family: "Liberation Mono", monospace;
    font-size: 12px;
}
.tb-key {
    width: 18px;
    height: 16px;
}
.tb-help {
    width: 17px;
    height: 17px;
}
.restore {
    flex-direction: column;
    gap: 4px;
}
.tb-restore {
    width: 9px;
    height: 8px;
}
.tray {
    width: 174px;
    height: 38px;
    display: flex;
    align-items: center;
    border: 1px solid;
    border-color: #808080 #fff #fff #808080;
}
.tray-chev {
    width: 8px;
    height: 9px;
    margin-left: 5px;
}
.tray-flag {
    width: 13px;
    height: 17px;
    margin-left: 10px;
}
.tray-net {
    width: 14px;
    height: 14px;
    margin-left: 11px;
    margin-top: 8px;
}
.tray-spk {
    width: 14px;
    height: 14px;
    margin-left: 14px;
    margin-top: 8px;
}
.clock {
    width: 56px;
    margin-left: 3px;
    padding-top: 1px;
    display: flex;
    flex-direction: column;
    align-items: center;
    line-height: 15px;
}
.tray-desk {
    width: 16px;
    height: 16px;
    margin-left: 5px;
}

/* site watermark */
.watermark {
    position: absolute;
    left: 880px;
    top: 693px;
    width: 130px;
    color: #d4d4d4;
    pointer-events: none;
}
.wm-logo {
    height: 30px;
    font-family: "Liberation Sans", sans-serif;
    font-weight: bold;
    font-size: 33px;
    line-height: 32px;
    white-space: nowrap;
    transform: scaleX(0.68);
    transform-origin: left top;
    text-shadow: 1px 1px 0 #505050, -1px -1px 0 #808080, 1px -1px 0 #808080, -1px 1px 0 #606060;
}
.wm-rule {
    width: 122px;
    height: 2px;
    margin: 0 0 0 2px;
    background: #9a9a9a;
}
.wm-bottom {
    display: flex;
    align-items: center;
    margin-top: 2px;
}
.wm-cn {
    font-size: 19px;
    font-weight: bold;
    line-height: 24px;
    text-shadow: 1px 1px 0 #606060, -1px 0 0 #8a8a8a;
}
.wm-blog {
    margin-left: 17px;
    margin-top: -2px;
    font-family: "Liberation Sans", sans-serif;
    font-size: 14px;
    color: #8a8a8a;
}
```
